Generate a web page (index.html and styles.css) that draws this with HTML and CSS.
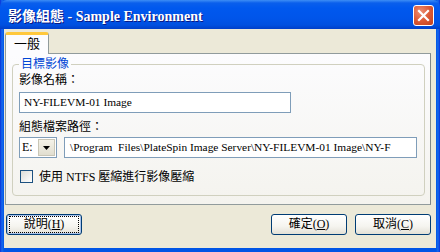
FILE: index.html
```html
<!DOCTYPE html>
<html lang="zh-Hant">
<head>
    <meta charset="UTF-8">
    <title>影像組態 - Sample Environment</title>
    <link rel="stylesheet" href="styles.css">
</head>
<body>
    <div class="window">
        <div class="titlebar">
            <span class="title">影像組態 - Sample Environment</span>
            <span class="close">
                <svg width="13" height="13" viewBox="0 0 13 13"><path d="M2 2 L11 11 M11 2 L2 11" stroke="#fff" stroke-width="2.2" stroke-linecap="square"/></svg>
            </span>
        </div>
        <div class="client">
            <div class="tabs">
                <div class="tab active">一般</div>
            </div>
            <div class="panel">
                <fieldset class="group">
                    <legend>目標影像</legend>
                    <div class="label first">影像名稱：</div>
                    <div class="field name">NY-FILEVM-01 Image</div>
                    <div class="label second">組態檔案路徑：</div>
                    <div class="row">
                        <div class="combo">
                            <span class="combo-text">E:</span>
                            <span class="combo-btn"><svg width="7" height="4" viewBox="0 0 7 4"><path d="M0 0 H7 L3.5 4 Z" fill="#000"/></svg></span>
                        </div>
                        <div class="field path">\Program&nbsp; Files\PlateSpin Image Server\NY-FILEVM-01 Image\NY-F</div>
                    </div>
                    <label class="check">
                        <span class="box"></span>
                        <span>使用 NTFS 壓縮進行影像壓縮</span>
                    </label>
                </fieldset>
            </div>
            <div class="buttons">
                <button class="btn focused"><span>說明(<u>H</u>)</span></button>
                <span class="spacer"></span>
                <button class="btn"><span>確定(<u>O</u>)</span></button>
                <button class="btn"><span>取消(<u>C</u>)</span></button>
            </div>
        </div>
    </div>
</body>
</html>
```

FILE: styles.css
```css
html, body {
    margin: 0;
    padding: 0;
}
body {
    font-family: "Liberation Serif", "Noto Sans CJK TC", serif;
    font-size: 12px;
    color: #000;
    background-color: #0054e3;
}
.window {
    width: 440px;
    height: 252px;
    box-sizing: border-box;
    display: flex;
    flex-direction: column;
    background: linear-gradient(to right, #0831d9 0, #166aee 2px, #0055e5 4px, #0055e5 436px, #166aee 438px, #0831d9 440px);
}
.titlebar {
    height: 29px;
    flex: none;
    display: flex;
    align-items: center;
    padding: 0 6px 0 8px;
    border-radius: 7px 7px 0 0;
    background: linear-gradient(to bottom, #3d8df5 0, #0a5fec 3px, #0058ee 8px, #0055ea 18px, #0050e0 25px, #003fc8 29px);
}
.title {
    flex: 1;
    color: #fff;
    font-weight: bold;
    font-size: 14px;
    text-shadow: 1px 1px #0a1883;
    padding-top: 1px;
}
.close {
    width: 19px;
    height: 19px;
    border: 1px solid #fff;
    border-radius: 3px;
    display: flex;
    align-items: center;
    justify-content: center;
    background: radial-gradient(circle at 35% 30%, #ec8f74 0, #dc5a36 50%, #c0401c 100%);
    margin-top: 1px;
}
.client {
    flex: 1;
    margin: 0 4px 4px 4px;
    background-color: #ece9d8;
    padding: 3px 5px 0 1px;
    display: flex;
    flex-direction: column;
}
.tabs {
    display: flex;
    height: 21px;
    position: relative;
    z-index: 1;
}
.tab {
    width: 44px;
    height: 22px;
    box-sizing: border-box;
    border: 1px solid #919b9c;
    border-bottom: none;
    border-top: 3px solid #ffc83c;
    border-radius: 3px 3px 0 0;
    background-color: #fcfcfe;
    text-align: center;
    font-size: 13px;
    line-height: 17px;
}
.panel {
    height: 152px;
    box-sizing: border-box;
    border: 1px solid #919b9c;
    border-right-color: #7f8788;
    background: linear-gradient(to bottom, #fcfcfe 0, #f4f3ee 100%);
    padding: 0 5px 0 6px;
}
.group {
    margin: 3px 0 0 0;
    padding: 0 7px 0 6px;
    height: 139px;
    box-sizing: border-box;
    border: 1px solid #d0d0bf;
    border-radius: 4px;
}
.group legend {
    color: #0046d5;
    padding: 0 2px;
    margin-left: 0;
    font-size: 12px;
    line-height: 14px;
}
.label {
    height: 16px;
    line-height: 16px;
}
.label.first {
    margin-top: 1px;
}
.label.second {
    margin-top: 6px;
}
.label + .field {
    margin-top: 4px;
}
.field {
    height: 21px;
    box-sizing: border-box;
    border: 1px solid #7f9db9;
    background-color: #fff;
    padding: 0 4px;
    font-size: 11.4px;
    line-height: 19px;
    white-space: nowrap;
    overflow: hidden;
}
.field.name {
    width: 272px;
}
.row {
    display: flex;
    gap: 7px;
    margin-top: 2px;
}
.field.path {
    flex: 1;
    padding-left: 5px;
}
.combo {
    width: 38px;
    height: 21px;
    box-sizing: border-box;
    border: 1px solid #7f9db9;
    background-color: #fff;
    display: flex;
    align-items: stretch;
}
.combo-text {
    flex: 1;
    padding-left: 2px;
    line-height: 19px;
}
.combo-btn {
    width: 15px;
    margin: 1px;
    display: flex;
    align-items: center;
    justify-content: center;
    background: linear-gradient(to bottom, #f4f2e8, #e1ded0);
    border: 1px solid #c9c6b6;
}
.check {
    display: flex;
    align-items: center;
    gap: 6px;
    margin-top: 9px;
    padding-left: 1px;
}
.box {
    width: 13px;
    height: 13px;
    box-sizing: border-box;
    border: 1px solid #1c5180;
    background: linear-gradient(135deg, #dcdcd7, #fff);
}
.buttons {
    display: flex;
    gap: 8px;
    margin-top: 9px;
    padding-left: 1px;
}
.spacer {
    flex: 1;
}
.btn {
    width: 76px;
    height: 21px;
    box-sizing: border-box;
    border: 1px solid #003c74;
    border-radius: 3px;
    background: linear-gradient(to bottom, #ffffff 0, #f5f4ef 60%, #e3e1d6 100%);
    font-family: "Liberation Serif", "Noto Sans CJK TC", serif;
    font-size: 12px;
    padding: 0;
    color: #000;
}
.btn span {
    display: block;
    line-height: 17px;
}
.btn.focused {
    box-shadow: inset 0 0 0 1px #aac3ea;
}
.btn.focused span {
    margin: 1px 2px;
    border: 1px dotted #000;
    line-height: 15px;
}
```
